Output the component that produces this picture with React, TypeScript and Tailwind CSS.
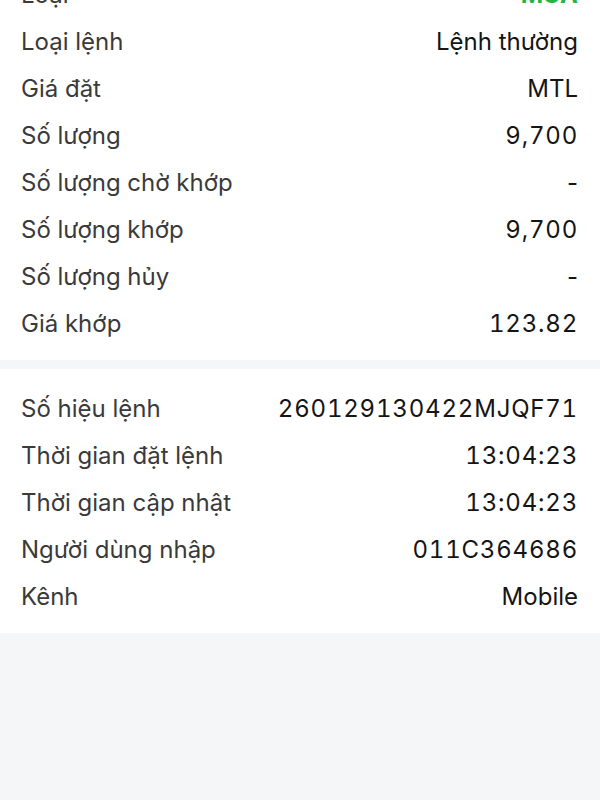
import React from "react";

type Row = { label: string; value: string; green?: boolean };

const orderRows: Row[] = [
  { label: "Loại", value: "MUA", green: true },
  { label: "Loại lệnh", value: "Lệnh thường" },
  { label: "Giá đặt", value: "MTL" },
  { label: "Số lượng", value: "9,700" },
  { label: "Số lượng chờ khớp", value: "-" },
  { label: "Số lượng khớp", value: "9,700" },
  { label: "Số lượng hủy", value: "-" },
  { label: "Giá khớp", value: "123.82" },
];

const infoRows: Row[] = [
  { label: "Số hiệu lệnh", value: "260129130422MJQF71" },
  { label: "Thời gian đặt lệnh", value: "13:04:23" },
  { label: "Thời gian cập nhật", value: "13:04:23" },
  { label: "Người dùng nhập", value: "011C364686" },
  { label: "Kênh", value: "Mobile" },
];

const DetailRow = ({ label, value, green }: Row) => {
  const numeric = /\d/.test(value);
  return (
    <div className="flex h-[47px] items-center justify-between">
      <span className="text-[#3a3a3a]">{label}</span>
      <span
        className={
          green
            ? "font-bold text-[#1db83f]"
            : numeric
            ? "tabular-nums tracking-[0.8px] text-[#151515]"
            : "text-[#151515]"
        }
      >
        {value}
      </span>
    </div>
  );
};

export default function App() {
  return (
    <div
      className="min-h-screen overflow-hidden bg-[#f5f6f8] text-[24px] leading-none"
      style={{ fontFamily: "Inter, 'Liberation Sans', sans-serif" }}
    >
      {/* thông tin lệnh (đã cuộn, dòng đầu bị cắt) */}
      <section className="-mt-[29px] bg-white pb-[13px] pl-[21px] pr-[22px]">
        {orderRows.map((r) => (
          <DetailRow key={r.label} {...r} />
        ))}
      </section>

      <section className="mt-[9px] bg-white pb-[13px] pl-[21px] pr-[22px] pt-[16px]">
        {infoRows.map((r) => (
          <DetailRow key={r.label} {...r} />
        ))}
      </section>
    </div>
  );
}
